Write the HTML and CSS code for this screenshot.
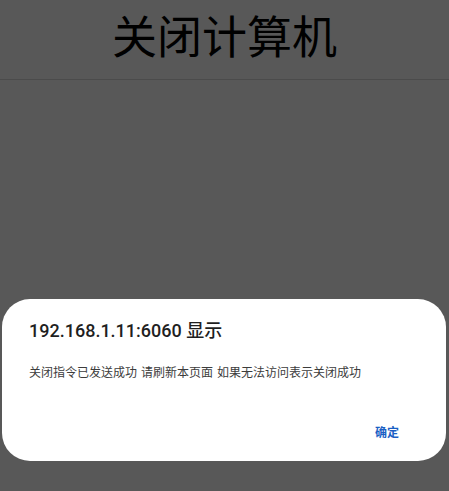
FILE: index.html
```html
<!DOCTYPE html>
<html lang="zh-CN">
<head>
<meta charset="utf-8">
<link rel="stylesheet" href="styles.css">
</head>
<body>
<header class="top">
  <h1 class="title">关闭计算机</h1>
</header>
<main class="content"></main>
<div class="backdrop">
  <div class="dialog">
    <div class="dialog-title">192.168.1.11:6060 显示</div>
    <div class="dialog-msg">关闭指令已发送成功 请刷新本页面 如果无法访问表示关闭成功</div>
    <div class="dialog-actions"><span class="btn">确定</span></div>
  </div>
</div>
</body>
</html>
```
FILE: styles.css
```css
html, body {
  margin: 0;
  padding: 0;
  height: 100%;
  background: #585858;
  font-family: "Noto Sans CJK SC", "Noto Sans", sans-serif;
}
.top {
  height: 79px;
  box-sizing: content-box;
  border-bottom: 1px solid #4b4b4b;
  padding-top: 0;
  text-align: center;
}
.title {
  margin: 0;
  padding-top: 12px;
  font-size: 45px;
  font-weight: 400;
  color: #000;
  line-height: 45px;
}
.backdrop {
  position: absolute;
  left: 0;
  top: 0;
  width: 449px;
  height: 491px;
}
.dialog {
  position: absolute;
  left: 2px;
  top: 299px;
  width: 444px;
  height: 162px;
  box-sizing: border-box;
  background: #fff;
  border-radius: 28px;
  padding: 20px 27px 0 27px;
}
.dialog-title {
  font-family: Roboto, "Noto Sans CJK SC", sans-serif;
  font-weight: 500;
  font-size: 18px;
  line-height: 24px;
  color: #1f1f1f;
}
.dialog-msg {
  font-family: Roboto, "Noto Sans CJK SC", sans-serif;
  margin-top: 21px;
  font-size: 12px;
  line-height: 18px;
  color: #3c3c3c;
  word-spacing: 1px;
}
.dialog-actions {
  display: flex;
  justify-content: flex-end;
  margin-top: 42px;
  padding-right: 20px;
}
.btn {
  font-size: 12px;
  line-height: 16px;
  font-weight: 700;
  color: #1a5fc4;
}
```
